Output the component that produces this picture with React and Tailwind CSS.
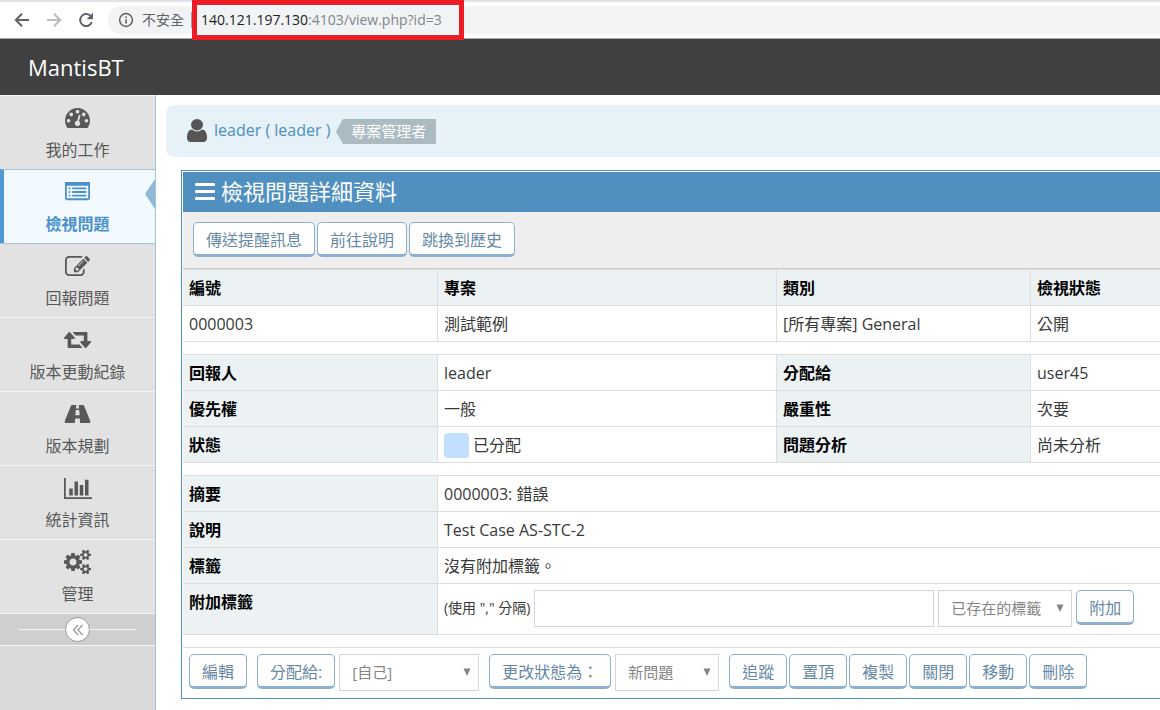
const ICONS = {
  gauge: {
    box: "0 256 1792 1408",
    size: "h-[20px] w-[25px]",
    d: "M384 1152q0-53-37.5-90.5t-90.5-37.5-90.5 37.5-37.5 90.5 37.5 90.5 90.5 37.5 90.5-37.5 37.5-90.5zm192-448q0-53-37.5-90.5t-90.5-37.5-90.5 37.5-37.5 90.5 37.5 90.5 90.5 37.5 90.5-37.5 37.5-90.5zm428 481l101-382q6-26-7.5-48.5t-38.5-29.5-48 6.5-30 39.5l-101 382q-60 5-107 43.5t-63 98.5q-20 77 20 146t117 89 146-20 89-117q16-60-6-117t-72-91zm660-33q0-53-37.5-90.5t-90.5-37.5-90.5 37.5-37.5 90.5 37.5 90.5 90.5 37.5 90.5-37.5 37.5-90.5zm-640-640q0-53-37.5-90.5t-90.5-37.5-90.5 37.5-37.5 90.5 37.5 90.5 90.5 37.5 90.5-37.5 37.5-90.5zm448 192q0-53-37.5-90.5t-90.5-37.5-90.5 37.5-37.5 90.5 37.5 90.5 90.5 37.5 90.5-37.5 37.5-90.5zm320 448q0 261-141 483-19 29-54 29h-1402q-35 0-54-29-141-221-141-483 0-182 71-348t191-286 286-191 348-71 348 71 286 191 191 286 71 348z",
  },
  list: {
    box: "0 256 1792 1408",
    size: "h-[20px] w-[25px]",
    d: "M384 1184v64q0 13-9.5 22.5t-22.5 9.5h-64q-13 0-22.5-9.5t-9.5-22.5v-64q0-13 9.5-22.5t22.5-9.5h64q13 0 22.5 9.5t9.5 22.5zm0-256v64q0 13-9.5 22.5t-22.5 9.5h-64q-13 0-22.5-9.5t-9.5-22.5v-64q0-13 9.5-22.5t22.5-9.5h64q13 0 22.5 9.5t9.5 22.5zm0-256v64q0 13-9.5 22.5t-22.5 9.5h-64q-13 0-22.5-9.5t-9.5-22.5v-64q0-13 9.5-22.5t22.5-9.5h64q13 0 22.5 9.5t9.5 22.5zm1152 512v64q0 13-9.5 22.5t-22.5 9.5h-960q-13 0-22.5-9.5t-9.5-22.5v-64q0-13 9.5-22.5t22.5-9.5h960q13 0 22.5 9.5t9.5 22.5zm0-256v64q0 13-9.5 22.5t-22.5 9.5h-960q-13 0-22.5-9.5t-9.5-22.5v-64q0-13 9.5-22.5t22.5-9.5h960q13 0 22.5 9.5t9.5 22.5zm0-256v64q0 13-9.5 22.5t-22.5 9.5h-960q-13 0-22.5-9.5t-9.5-22.5v-64q0-13 9.5-22.5t22.5-9.5h960q13 0 22.5 9.5t9.5 22.5zm128 704v-832q0-13-9.5-22.5t-22.5-9.5h-1472q-13 0-22.5 9.5t-9.5 22.5v832q0 13 9.5 22.5t22.5 9.5h1472q13 0 22.5-9.5t9.5-22.5zm128-1088v1088q0 66-47 113t-113 47h-1472q-66 0-113-47t-47-113v-1088q0-66 47-113t113-47h1472q66 0 113 47t47 113z",
  },
  edit: {
    box: "0 128 1792 1408",
    size: "h-[20px] w-[25px]",
    d: "M888 1184l116-116-152-152-116 116v56h96v96h56zm440-720q-16-16-33 1l-350 350q-17 17-1 33t33-1l350-350q17-17 1-33zm80 594v190q0 119-84.5 203.5t-203.5 84.5h-832q-119 0-203.5-84.5t-84.5-203.5v-832q0-119 84.5-203.5t203.5-84.5h832q63 0 117 25 15 7 18 23 3 17-9 29l-49 49q-14 14-32 8-23-6-45-6h-832q-66 0-113 47t-47 113v832q0 66 47 113t113 47h832q66 0 113-47t47-113v-126q0-13 9-22l64-64q15-15 35-7t20 29zm-96-738l288 288-672 672h-288v-288zm444 132l-92 92-288-288 92-92q28-28 68-28t68 28l152 152q28 28 28 68t-28 68z",
  },
  retweet: {
    box: "0 -64 1920 1280",
    size: "h-[18px] w-[27px]",
    d: "M1280 1120q0 13-9.5 22.5t-22.5 9.5h-960q-8 0-13.5-2t-9-7-5.5-8-3-11.5-1-11.5v-600h-192q-26 0-45-19t-19-45q0-24 15-41l320-384q19-22 49-22t49 22l320 384q15 17 15 41 0 26-19 45t-45 19h-192v384h576q16 0 25 11l160 192q7 10 7 21zm640-416q0 24-15 41l-320 384q-20 23-49 23t-49-23l-320-384q-15-17-15-41 0-26 19-45t45-19h192v-384h-576q-16 0-25-12l-160-192q-7-9-7-20 0-13 9.5-22.5t22.5-9.5h960q8 0 13.5 2t9 7 5.5 8 3 11.5 1 11.5v600h192q26 0 45 19t19 45z",
  },
  road: {
    box: "0 256 1920 1280",
    size: "h-[18px] w-[27px]",
    d: "M1111 964v-4l-24-320q-1-13-11-22.5t-23-9.5h-186q-13 0-23 9.5t-11 22.5l-24 320v4q-1 12 8 20t21 8h244q12 0 21-8t8-20zM1870 1463q0 73-46 73h-704q13 0 22-9.5t8-22.5l-20-256q-1-13-11-22.5t-23-9.5h-272q-13 0-23 9.5t-11 22.5l-20 256q-1 13 8 22.5t22 9.5h-704q-46 0-46-73 0-54 26-116l417-1044q8-19 26-33t38-14h339q-13 0-23 9.5t-11 22.5l-15 192q-1 14 8 23t22 9h166q13 0 22-9t8-23l-15-192q-1-13-11-22.5t-23-9.5h339q20 0 38 14t26 33l417 1044q26 62 26 116z",
  },
  chart: {
    box: "0 128 2048 1536",
    size: "h-[21px] w-[28px]",
    d: "M640 896v512h-256v-512h256zm384-512v1024h-256v-1024h256zm1024 1152v128h-2048v-1536h128v1408h1920zm-640-896v768h-256v-768h256zm384-384v1152h-256v-1152h256z",
  },
  cogs: {
    box: "0 32 1920 1728",
    size: "h-[24px] w-[27px]",
    d: "M896 896q0-106-75-181t-181-75-181 75-75 181 75 181 181 75 181-75 75-181zm768 512q0-52-38-90t-90-38-90 38-38 90q0 53 37.5 90.5t90.5 37.5 90.5-37.5 37.5-90.5zm0-1024q0-52-38-90t-90-38-90 38-38 90q0 53 37.5 90.5t90.5 37.5 90.5-37.5 37.5-90.5zm-384 421v185q0 10-7 19.5t-16 10.5l-155 24q-11 35-32 76 34 48 90 115 7 11 7 20 0 12-7 19-23 30-82.5 89.5t-78.5 59.5q-11 0-21-7l-115-90q-37 19-77 31-11 108-23 155-7 24-30 24h-186q-11 0-20-7.5t-10-17.5l-23-153q-34-10-75-31l-118 89q-7 7-20 7-11 0-21-8-144-133-144-160 0-9 7-19 10-14 41-53t47-61q-23-44-35-82l-152-24q-10-1-17-9.5t-7-19.5v-185q0-10 7-19.5t16-10.5l155-24q11-35 32-76-34-48-90-115-7-11-7-20 0-12 7-20 22-30 82-89t79-59q11 0 21 7l115 90q34-18 77-32 11-108 23-154 7-24 30-24h186q11 0 20 7.5t10 17.5l23 153q34 10 75 31l118-89q8-7 20-7 11 0 21 8 144 133 144 160 0 8-7 19-12 16-42 54t-45 60q23 48 34 82l152 23q10 2 17 10.5t7 19.5zm640 533v140q0 16-149 31-12 27-30 52 51 113 51 138 0 4-4 7-122 71-124 71-8 0-46-47t-52-68q-20 2-30 2t-30-2q-14 21-52 68t-46 47q-2 0-124-71-4-3-4-7 0-25 51-138-18-25-30-52-149-15-149-31v-140q0-16 149-31 13-29 30-52-51-113-51-138 0-4 4-7 4-2 35-20t59-34 30-16q8 0 46 46.5t52 67.5q20-2 30-2t30 2q51-71 92-112l6-2q4 0 124 70 4 3 4 7 0 25-51 138 17 23 30 52 149 15 149 31zm0-1024v140q0 16-149 31-12 27-30 52 51 113 51 138 0 4-4 7-122 71-124 71-8 0-46-47t-52-68q-20 2-30 2t-30-2q-14 21-52 68t-46 47q-2 0-124-71-4-3-4-7 0-25 51-138-18-25-30-52-149-15-149-31v-140q0-16 149-31 13-29 30-52-51-113-51-138 0-4 4-7 4-2 35-20t59-34 30-16q8 0 46 46.5t52 67.5q20-2 30-2t30 2q51-71 92-112l6-2q4 0 124 70 4 3 4 7 0 25-51 138 17 23 30 52 149 15 149 31z",
  },
  user: {
    box: "256 128 1280 1536",
    size: "h-[23px] w-[20px]",
    d: "M1536 1399q0 109-62.5 187t-150.5 78h-854q-88 0-150.5-78t-62.5-187q0-85 8.5-160.5t31.5-152 58.5-131 94-89 134.5-34.5q131 128 313 128t313-128q76 0 134.5 34.5t94 89 58.5 131 31.5 152 8.5 160.5zm-256-887q0 159-112.5 271.5t-271.5 112.5-271.5-112.5-112.5-271.5 112.5-271.5 271.5-112.5 271.5 112.5 112.5 271.5z",
  },
};

function Icon({ name }) {
  const icon = ICONS[name];
  return (
    <svg viewBox={icon.box} preserveAspectRatio="none" className={`${icon.size} shrink-0`} fill="currentColor" aria-hidden="true">
      <path d={icon.d} />
    </svg>
  );
}

const MENU = [
  { icon: "gauge", label: "我的工作" },
  { icon: "list", label: "檢視問題", active: true },
  { icon: "edit", label: "回報問題" },
  { icon: "retweet", label: "版本更動紀錄" },
  { icon: "road", label: "版本規劃" },
  { icon: "chart", label: "統計資訊" },
  { icon: "cogs", label: "管理" },
];

function BrowserBar() {
  return (
    <div className="flex h-[39px] shrink-0 items-center border-t-2 border-b border-t-[#dee1e6] border-b-[#a5a8a8] bg-white pl-3">
      <button type="button" aria-label="上一頁" className="flex w-8 text-[#5f6368]">
        <svg viewBox="0 0 20 20" className="size-5" fill="none" stroke="currentColor" strokeWidth="2" aria-hidden="true">
          <path d="M17 10H4M10 3.8L3.8 10l6.2 6.2" />
        </svg>
      </button>
      <button type="button" aria-label="下一頁" className="flex w-8 text-[#babcbe]">
        <svg viewBox="0 0 20 20" className="size-5" fill="none" stroke="currentColor" strokeWidth="2" aria-hidden="true">
          <path d="M3 10h13M10 3.8l6.2 6.2-6.2 6.2" />
        </svg>
      </button>
      <button type="button" aria-label="重新載入" className="flex w-8 text-[#5f6368]">
        <svg viewBox="0 0 20 20" className="size-5" aria-hidden="true">
          <path d="M15.8 12.2A6 6 0 1 1 14.4 5.8L15.8 7.2" fill="none" stroke="currentColor" strokeWidth="2" />
          <path d="M17 2.8v6.4h-6.4z" fill="currentColor" />
        </svg>
      </button>
      <div className="flex h-7 flex-1 items-center rounded-l-full bg-[#f1f3f4] pl-[10px] text-sm text-[#5f6368]">
        <svg viewBox="0 0 16 16" className="size-4" aria-hidden="true">
          <circle cx="8" cy="8" r="6.4" fill="none" stroke="currentColor" strokeWidth="1.5" />
          <path d="M7.2 4.4h1.6V6H7.2zM7.2 7.2h1.6v4.4H7.2z" fill="currentColor" />
        </svg>
        <span className="ml-2">不安全</span>
        <span className="ml-[7px] h-4 w-px bg-[#9aa0a6]" />
        <div className="relative z-10 flex h-10 w-[272px] shrink-0 items-center border-[5px] border-[#ed1c24] pl-1 text-[#202124]">
          <span>
            140.121.197.130<span className="text-[#80868b]">:4103/view.php?id=3</span>
          </span>
        </div>
      </div>
    </div>
  );
}

function Sidebar() {
  return (
    <nav className="flex w-[156px] shrink-0 flex-col border-r border-[#a4c3d9] bg-[#dadada]">
      {MENU.map((item) =>
        item.active ? (
          <a
            key={item.label}
            href="#"
            className="relative flex h-[74px] flex-col items-center border-t border-r-0 border-l-4 border-[#9fc3dc] border-l-[#4f99d0] bg-[#f2f9ff] pt-3 pr-1 font-bold text-[#4a90cb]"
          >
            <Icon name={item.icon} />
            <span className="mt-[10px] leading-6">{item.label}</span>
            <svg viewBox="0 0 10 30" className="absolute top-[9px] right-0 h-[30px] w-[10px]" aria-hidden="true">
              <path d="M10 0v30L0 15z" fill="#8fb9d8" />
            </svg>
          </a>
        ) : (
          <a
            key={item.label}
            href="#"
            className="flex h-[74px] flex-col items-center border-t border-[#f5f5f5] bg-[#e2e2e2] pt-[10px] text-[#585858] [a.relative+&]:border-[#9fc3dc]"
          >
            <span className="flex h-6 items-center">
              <Icon name={item.icon} />
            </span>
            <span className="mt-2 leading-6">{item.label}</span>
          </a>
        ),
      )}
      <div className="flex h-[33px] items-center border-y border-[#f5f5f5] bg-[#cfcfcf] px-[19px]">
        <span className="h-px flex-1 bg-[#f5f5f5]" />
        <button type="button" aria-label="收合選單" className="flex size-[25px] items-center justify-center rounded-full border border-[#999] bg-white text-[#999]">
          <svg viewBox="0 0 12 12" className="size-3" fill="none" stroke="currentColor" strokeWidth="1.3" aria-hidden="true">
            <path d="M6 1L1.5 6 6 11M10.5 1L6 6l4.5 5" />
          </svg>
        </button>
        <span className="h-px flex-1 bg-[#f5f5f5]" />
      </div>
    </nav>
  );
}

function Button({ children }) {
  return (
    <button
      type="button"
      className="h-[35px] shrink-0 rounded-[5px] border border-b-[3px] border-[#8cb1d0] bg-white px-3 pt-0.5 leading-6 whitespace-nowrap text-[#6688a6]"
    >
      {children}
    </button>
  );
}

function Select({ label, option, width }) {
  return (
    <span className={`relative flex shrink-0 ${width}`}>
      <select aria-label={label} className="h-[37px] w-full appearance-none border border-[#d5d5d5] bg-white pl-3 text-[15px] text-[#858585]">
        <option>{option}</option>
      </select>
      <svg viewBox="0 0 8 8" className="pointer-events-none absolute top-[14px] right-2 size-2" aria-hidden="true">
        <path d="M0.5 0.5h7L4 8z" fill="#858585" />
      </svg>
    </span>
  );
}

function Th({ children, ...rest }) {
  return (
    <th className="border-r border-b border-[#ddd] bg-[#ecf2f4] px-[6px] pt-1 text-left align-top leading-7 font-bold text-black last:border-r-0" {...rest}>
      {children}
    </th>
  );
}

function Td({ children, ...rest }) {
  return (
    <td className="border-r border-b border-[#ddd] px-[6px] pt-1 align-top leading-7 last:border-r-0" {...rest}>
      {children}
    </td>
  );
}

function Spacer() {
  return (
    <tr className="h-[13px]">
      <td colSpan={4} className="border-b border-[#ddd]" />
    </tr>
  );
}

function IssueTable() {
  return (
    <table className="w-full table-fixed border-separate border-spacing-0 border-t border-[#ddd] text-base text-[#393939]">
      <colgroup>
        <col className="w-[26.1%]" />
        <col className="w-[34.7%]" />
        <col className="w-[26%]" />
        <col />
      </colgroup>
      <tbody>
        <tr className="h-9">
          <Th scope="col">編號</Th>
          <Th scope="col">專案</Th>
          <Th scope="col">類別</Th>
          <Th scope="col">檢視狀態</Th>
        </tr>
        <tr className="h-9">
          <Td>0000003</Td>
          <Td>測試範例</Td>
          <Td>[所有專案] General</Td>
          <Td>公開</Td>
        </tr>
        <Spacer />
        <tr className="h-9">
          <Th scope="row">回報人</Th>
          <Td>leader</Td>
          <Th scope="row">分配給</Th>
          <Td>user45</Td>
        </tr>
        <tr className="h-9">
          <Th scope="row">優先權</Th>
          <Td>一般</Td>
          <Th scope="row">嚴重性</Th>
          <Td>次要</Td>
        </tr>
        <tr className="h-9">
          <Th scope="row">狀態</Th>
          <Td>
            <span className="flex items-center gap-1">
              <span className="size-[25px] rounded bg-[#c2dfff]" />
              已分配
            </span>
          </Td>
          <Th scope="row">問題分析</Th>
          <Td>尚未分析</Td>
        </tr>
        <Spacer />
        <tr className="h-9">
          <Th scope="row">摘要</Th>
          <Td colSpan={3}>0000003: 錯誤</Td>
        </tr>
        <tr className="h-9">
          <Th scope="row">說明</Th>
          <Td colSpan={3}>Test Case AS-STC-2</Td>
        </tr>
        <tr className="h-9">
          <Th scope="row">標籤</Th>
          <Td colSpan={3}>沒有附加標籤。</Td>
        </tr>
        <tr className="h-[51px]">
          <Th scope="row">附加標籤</Th>
          <td colSpan={3} className="border-b border-[#ddd] px-[6px] pt-[6px] align-top">
            <div className="flex items-start gap-1">
              <label htmlFor="tag-string" className="text-sm leading-9 whitespace-nowrap">
                (使用 "," 分隔)
              </label>
              <input id="tag-string" type="text" className="h-[37px] w-[400px] border border-[#d5d5d5] bg-white px-1" />
              <Select label="已存在的標籤" option="已存在的標籤" width="w-[134px]" />
              <Button>附加</Button>
            </div>
          </td>
        </tr>
        <Spacer />
      </tbody>
    </table>
  );
}

export default function App() {
  return (
    <div className="flex h-screen flex-col overflow-hidden bg-white font-['Open_Sans','Noto_Sans_CJK_TC',sans-serif] text-base">
      <BrowserBar />
      <header className="flex h-14 shrink-0 items-center bg-[#404040] pl-7">
        <a href="#" className="text-[22px] text-white">
          MantisBT
        </a>
      </header>
      <div className="flex min-h-0 flex-1">
        <Sidebar />
        <main className="min-w-0 flex-1 pt-[10px] pl-[10px]">
          <div className="flex h-[52px] items-center rounded-l-lg bg-[#e6f1f8] pb-0.5 pl-[21px]">
            <span className="flex text-[#555]">
              <Icon name="user" />
            </span>
            <a href="#" className="ml-[7px] text-[#4c8fbd]">
              leader ( leader )
            </a>
            <span className="mt-0.5 ml-[6px] flex items-center text-[15px] text-white">
              <svg viewBox="0 0 7 25" className="h-[25px] w-[7px]" aria-hidden="true">
                <path d="M7 0v25L0 12.5z" fill="#abbac3" />
              </svg>
              <span className="bg-[#abbac3] pr-[10px] pl-2 leading-[25px]">專案管理者</span>
            </span>
          </div>
          <section className="mt-[13px] ml-[15px] border border-r-0 border-[#5090c1] pt-px pl-px">
            <h1 className="flex h-10 items-center gap-[6px] bg-[#5090c1] pb-0.5 pl-3 text-[22px] text-white">
              <svg viewBox="0 0 20 17" className="h-[17px] w-5" fill="currentColor" aria-hidden="true">
                <rect width="20" height="3" rx="1" />
                <rect y="7" width="20" height="3" rx="1" />
                <rect y="14" width="20" height="3" rx="1" />
              </svg>
              檢視問題詳細資料
            </h1>
            <div className="flex gap-0.5 border-b border-[#ccc] bg-[#eee] px-[10px] pt-[10px] pb-[11px]">
              <Button>傳送提醒訊息</Button>
              <Button>前往說明</Button>
              <Button>跳換到歷史</Button>
            </div>
            <IssueTable />
            <div className="flex items-start gap-[10px] px-[6px] pt-[6px] pb-[7px]">
              <Button>編輯</Button>
              <div className="flex gap-1">
                <Button>分配給:</Button>
                <Select label="分配給" option="[自己]" width="w-[140px]" />
              </div>
              <div className="flex gap-1">
                <Button>更改狀態為：</Button>
                <Select label="更改狀態為" option="新問題" width="w-[104px]" />
              </div>
              <div className="flex gap-0.5">
                <Button>追蹤</Button>
                <Button>置頂</Button>
                <Button>複製</Button>
                <Button>關閉</Button>
                <Button>移動</Button>
                <Button>刪除</Button>
              </div>
            </div>
          </section>
        </main>
      </div>
    </div>
  );
}
